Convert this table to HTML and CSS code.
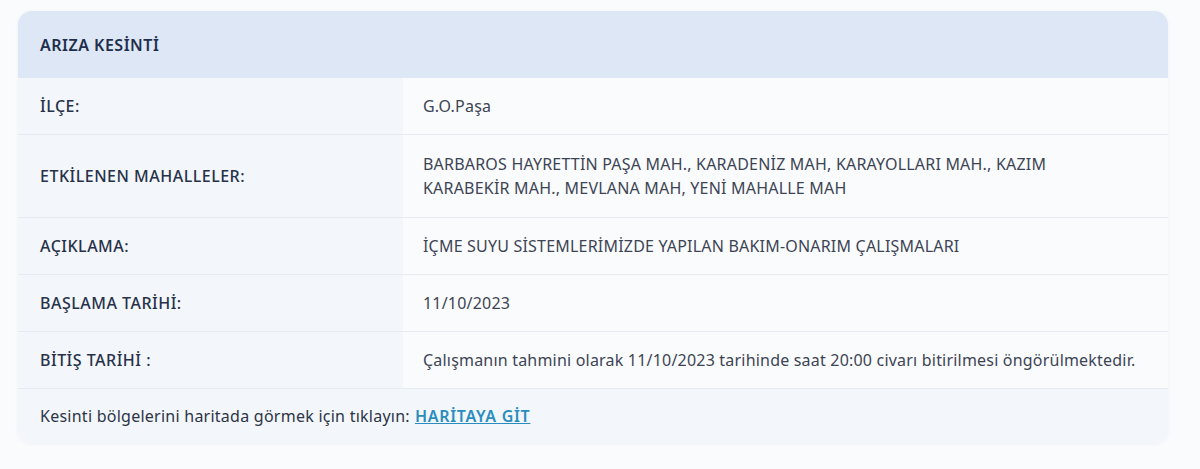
FILE: index.html
```html
<!DOCTYPE html>
<html lang="tr">
<head>
    <meta charset="UTF-8">
    <title>Arıza Kesinti</title>
    <link rel="stylesheet" href="styles.css">
</head>
<body>
    <div class="card">
        <div class="card-head">ARIZA KESİNTİ</div>

        <div class="row">
            <div class="label">İLÇE:</div>
            <div class="value">G.O.Paşa</div>
        </div>
        <div class="row row-tall">
            <div class="label">ETKİLENEN MAHALLELER:</div>
            <div class="value">BARBAROS HAYRETTİN PAŞA MAH., KARADENİZ MAH, KARAYOLLARI MAH., KAZIM<br>KARABEKİR MAH., MEVLANA MAH, YENİ MAHALLE MAH</div>
        </div>
        <div class="row">
            <div class="label">AÇIKLAMA:</div>
            <div class="value">İÇME SUYU SİSTEMLERİMİZDE YAPILAN BAKIM-ONARIM ÇALIŞMALARI</div>
        </div>
        <div class="row">
            <div class="label">BAŞLAMA TARİHİ:</div>
            <div class="value">11/10/2023</div>
        </div>
        <div class="row">
            <div class="label">BİTİŞ TARİHİ :</div>
            <div class="value">Çalışmanın tahmini olarak 11/10/2023 tarihinde saat 20:00 civarı bitirilmesi öngörülmektedir.</div>
        </div>

        <div class="card-foot">
            Kesinti bölgelerini haritada görmek için tıklayın: <a href="#">HARİTAYA GİT</a>
        </div>
    </div>
</body>
</html>
```

FILE: styles.css
```css
body {
    margin: 0;
    padding: 11px 32px 25px 18px;
    background: #fafbfd;
    font-family: "Noto Sans", Lato, sans-serif;
    color: #2c3546;
}
.card {
    border-radius: 14px;
    overflow: hidden;
    background: #fafbfd;
    box-shadow: 0 1px 4px rgba(40, 60, 100, 0.06);
}
.card-head {
    height: 67px;
    display: flex;
    align-items: center;
    padding: 0 22px;
    background: #dee7f5;
    color: #1f2e4d;
    font-weight: 600;
    font-size: 16px;
    letter-spacing: 0.5px;
}
.row {
    display: grid;
    grid-template-columns: 385px 1fr;
    border-bottom: 1px solid #e7ebf1;
    min-height: 56px;
}
.row-tall {
    min-height: 82px;
}
.label {
    display: flex;
    align-items: center;
    padding: 0 22px;
    background: #f3f6fa;
    color: #27324a;
    font-size: 16px;
    font-weight: 500;
    letter-spacing: 0.5px;
}
.value {
    display: flex;
    align-items: center;
    padding: 0 20px;
    font-size: 16px;
    line-height: 24px;
    letter-spacing: 0.2px;
    color: #3d4454;
}
.row-tall .value {
    display: block;
    align-self: center;
}
.card-foot {
    height: 54px;
    display: flex;
    align-items: center;
    padding: 0 22px;
    background: #f3f6fa;
    font-size: 16px;
    letter-spacing: 0.25px;
    color: #2c3546;
}
.card-foot a {
    margin-left: 5px;
    color: #2a8dc0;
    font-weight: 600;
    letter-spacing: 0.7px;
}
```
